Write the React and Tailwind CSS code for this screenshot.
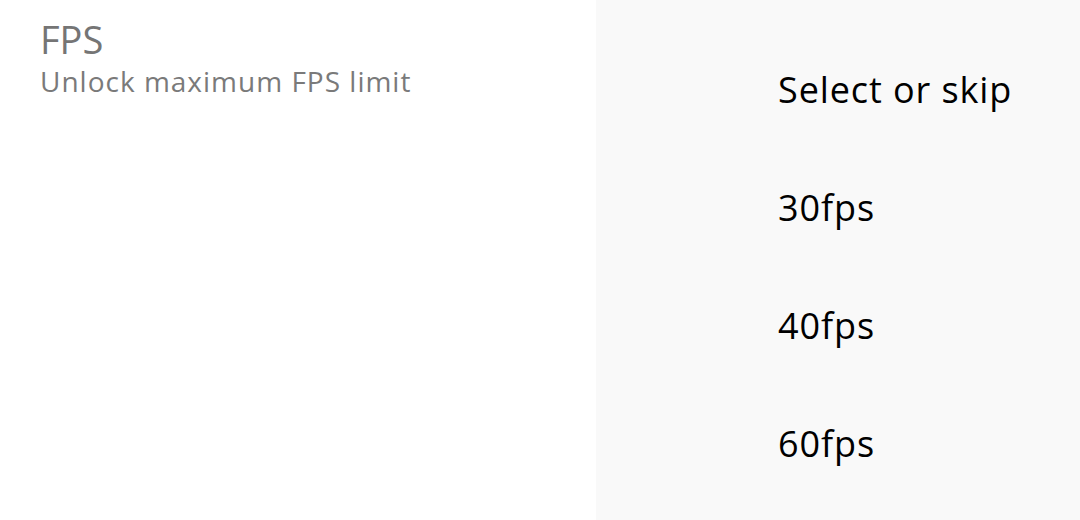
export default function App() {
  return (
    <div className="flex w-[1080px] h-[520px] overflow-hidden bg-white" style={{ fontFamily: "'Open Sans', 'Noto Sans', sans-serif" }}>
      <div className="w-[596px] shrink-0 pl-[40px] pt-[13px]">
        <div className="text-[38px] leading-[52px] text-[#757575]">FPS</div>
        <div className="text-[28px] leading-[36px] tracking-[1px] text-[#7a7a7a] -mt-[2px]">Unlock maximum FPS limit</div>
      </div>
      <div className="flex-1 bg-[#f9f9f9] pl-[182px] pt-[31px] flex flex-col text-black tracking-[0.9px]">
        <div className="h-[118px] text-[36px] leading-[118px]">Select or skip</div>
        <div className="h-[118px] text-[36px] leading-[118px]">30fps</div>
        <div className="h-[118px] text-[36px] leading-[118px]">40fps</div>
        <div className="h-[118px] text-[36px] leading-[118px]">60fps</div>
      </div>
    </div>
  );
}
